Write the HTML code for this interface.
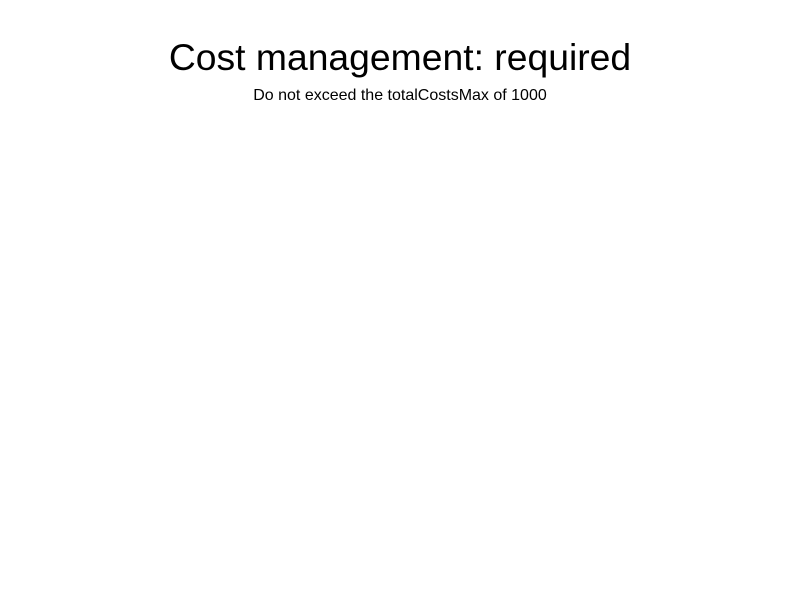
<!DOCTYPE html>
<html><head><meta charset="utf-8"><style>
html,body{margin:0;padding:0;background:#fff;width:800px;height:600px;overflow:hidden;font-family:"Liberation Sans",Arial,sans-serif;color:#000}
h1{position:absolute;top:37px;left:0;width:800px;margin:0;text-align:center;font-weight:normal;font-size:37.3px;line-height:40px}
p{position:absolute;top:87px;left:0;width:800px;margin:0;text-align:center;font-size:16px;line-height:18px}
</style></head><body>
<h1>Cost management: required</h1>
<p>Do not exceed the totalCostsMax of 1000</p>
</body></html>
